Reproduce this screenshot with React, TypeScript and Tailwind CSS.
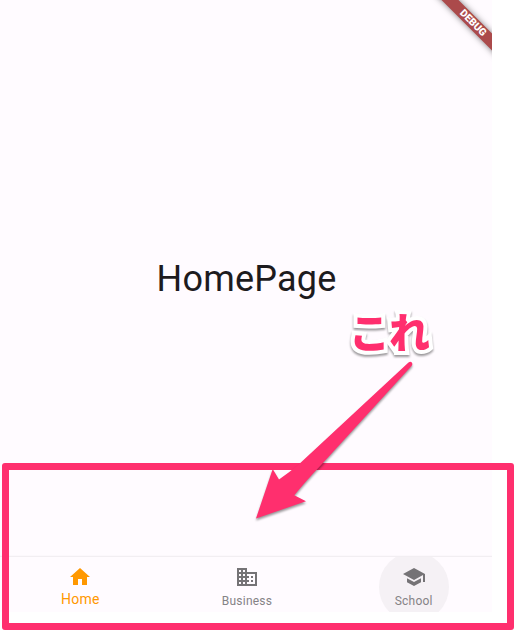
import React from "react";

const HOME = "M10 20v-6h4v6h5v-8h3L12 3 2 12h3v8z";
const BUSINESS =
  "M12 7V3H2v18h20V7H12zM6 19H4v-2h2v2zm0-4H4v-2h2v2zm0-4H4V9h2v2zm0-4H4V5h2v2zm4 12H8v-2h2v2zm0-4H8v-2h2v2zm0-4H8V9h2v2zm0-4H8V5h2v2zm10 12h-8v-2h2v-2h-2v-2h2v-2h-2V9h8v10zm-2-8h-2v2h2v-2zm0 4h-2v2h2v-2z";
const SCHOOL = "M5 13.18v4L12 21l7-3.82v-4L12 17l-7-3.82zM12 3L1 9l11 6 9-4.91V17h2V9L12 3z";

function NavItem({ label, path, selected = false, ripple = false }: { label: string; path: string; selected?: boolean; ripple?: boolean }) {
  return (
    <button className={`relative flex flex-1 flex-col items-center overflow-hidden pt-2 ${selected ? "text-[#ff9800]" : "text-[#757376]"}`}>
      {ripple && <span className="absolute -top-[5px] left-1/2 size-[70px] -translate-x-1/2 rounded-full bg-[#f5f1f5]" />}
      <svg viewBox="0 0 24 24" className="relative size-6 shrink-0" fill="currentColor">
        <path d={path} />
      </svg>
      <span className={selected ? "relative text-[14px] leading-5 tracking-[0.3px]" : "relative mt-[2px] text-[12px] leading-5 tracking-[0.22px] text-[#858386]"}>{label}</span>
    </button>
  );
}

export default function App() {
  return (
    <div className="relative h-[631px] w-[514px] overflow-hidden bg-white font-[Roboto,sans-serif]">
      <div className="relative flex h-[612px] w-[492px] flex-col overflow-hidden bg-[#fffbff]">
        <main className="flex flex-1 items-center justify-center">
          <h1 className="pl-[1px] text-[36px] leading-[44px] tracking-[0.2px] text-[#1d1b1e]">HomePage</h1>
        </main>
        <nav className="-mr-[5px] -ml-[3px] flex h-[55px] shrink-0 bg-[#fffbff] shadow-[0_0_2px_rgba(0,0,0,0.16)]">
          <NavItem label="Home" path={HOME} selected />
          <NavItem label="Business" path={BUSINESS} />
          <NavItem label="School" path={SCHOOL} ripple />
        </nav>
        <div className="absolute top-[16.5px] left-[423px] flex h-3 w-[100px] rotate-45 items-center justify-center bg-[#ab4a4b] text-[10.2px] leading-3 font-black text-white shadow-[0_0_6px_rgba(0,0,0,0.5)]">
          DEBUG
        </div>
      </div>

      <div className="absolute top-[463px] left-[2px] h-[167px] w-[512px] rounded-[3px] border-[7px] border-[#ff2f6e]" />
      <svg className="absolute inset-0 drop-shadow-[0_2px_1px_rgba(0,0,0,0.4)]" width="514" height="631" viewBox="0 0 514 631">
        <path
          d="M256 518.5 272.7 469 279 479.5Q290 472 300 463.3L408.5 362.5Q410.5 361 411.8 362.5Q413 364 411.5 366L322 464Q305 482 294.3 495.3L306 501.3Z"
          fill="#ff2f6e"
        />
      </svg>
      <div className="absolute top-[300px] left-[349px] font-['Noto_Sans_CJK_JP',sans-serif] text-[41px] leading-[60px] font-black tracking-[-1px] whitespace-nowrap text-[#ff2f6e] drop-shadow-[0_2px_1px_rgba(0,0,0,0.4)] [-webkit-text-stroke:8px_white] [paint-order:stroke_fill] [stroke-linejoin:round]">
        これ
      </div>
    </div>
  );
}
